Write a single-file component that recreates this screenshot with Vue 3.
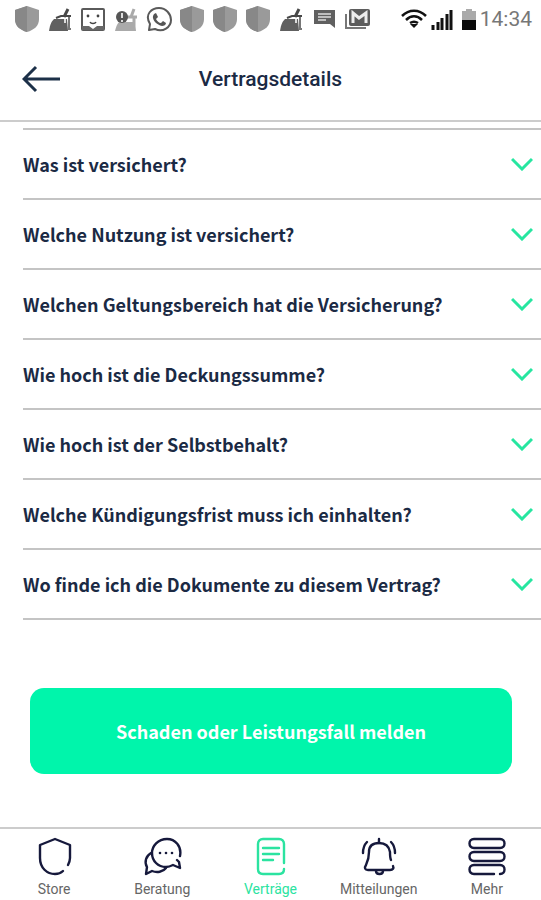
<script setup>
import { ref } from 'vue';

const notifications = [
  'shield', 'broom', 'face', 'alert', 'whatsapp',
  'shield', 'shield', 'shield', 'broom', 'chat', 'mail'
];

const questions = [
  'Was ist versichert?',
  'Welche Nutzung ist versichert?',
  'Welchen Geltungsbereich hat die Versicherung?',
  'Wie hoch ist die Deckungssumme?',
  'Wie hoch ist der Selbstbehalt?',
  'Welche Kündigungsfrist muss ich einhalten?',
  'Wo finde ich die Dokumente zu diesem Vertrag?'
];

const tabs = [
  {
    id: 'store',
    label: 'Store',
    paths: ['M34 29C35 27 36 25 36 22V9L21 3L6 9V22C6 32 13 38 21 38C24 38 27 37 29 35']
  },
  {
    id: 'advice',
    label: 'Beratung',
    paths: [
      'M38 20C40 10 33 3 25 3C16 3 10 10 10 17C10 25 16 31 24 31C27 31 29 30 31 29L38 32L37 26L35 24',
      'M9 17C4 20 2 26 5 31L4 38L10 35C15 37 21 36 24 32'
    ]
  },
  {
    id: 'contracts',
    label: 'Verträge',
    paths: [
      'M34 27V8C34 5 32 3 29 3H13C10 3 8 5 8 8V33C8 36 10 38 13 38H29C32 38 34 36 34 33',
      'M13 12H29M13 18H29M13 24H23'
    ]
  },
  {
    id: 'messages',
    label: 'Mitteilungen',
    paths: [
      'M32 24C31 22 31 19 31 16C30 10 26 7 20 7C14 7 10 10 10 16C10 23 9 25 7 29C5 32 6 34 9 34H31C34 34 35 32 34 30',
      'M20 3V7M17 35C17 39 24 39 24 35M8 6C5 9 4 12 4 17M32 6C35 9 36 12 36 17'
    ]
  },
  {
    id: 'more',
    label: 'Mehr',
    paths: [
      'M7 3H33C39 3 39 12 33 12H7C1 12 1 3 7 3Z',
      'M7 16H33C39 16 39 25 33 25H7C1 25 1 16 7 16Z',
      'M27 38H7C1 38 1 29 7 29H33C39 29 39 38 33 38'
    ]
  }
];

const activeTab = ref('contracts');
</script>

<template>
  <div class="page">
    <!-- Statusleiste -->
    <div class="status-bar">
      <div class="notifications">
        <svg
          v-for="(icon, index) in notifications"
          :key="index"
          class="status-icon"
          viewBox="0 0 28 28"
          aria-hidden="true"
        >
          <g v-if="icon === 'shield'">
            <path d="M14 1L26 5V14C26 21 21 25 14 27C7 25 2 21 2 14V5Z" fill="#9a9a9a" />
            <path d="M14 1V27C7 25 2 21 2 14V5Z" fill="#888" />
          </g>
          <g v-else-if="icon === 'broom'">
            <path d="M8 14H21L22 26H3C4 20 5 17 8 14Z" fill="#606060" />
            <path d="M10 13L15 11H25" fill="none" stroke="#484848" stroke-width="2" />
            <path d="M18 12L22 4" fill="none" stroke="#484848" stroke-width="3" />
            <path d="M19 14V18" fill="none" stroke="#ddd" stroke-width="2" />
            <path d="M23 12V24H25" fill="none" stroke="#777" stroke-width="2" />
          </g>
          <g v-else-if="icon === 'face'">
            <rect x="3" y="4" width="22" height="21" rx="1" fill="none" stroke="#5a5a5a" stroke-width="2" />
            <path d="M3 21H10L14 24L18 21H25V25H3Z" fill="#686868" />
            <circle cx="9" cy="11" r="1.4" fill="#444" />
            <circle cx="19" cy="11" r="1.4" fill="#444" />
            <path d="M11 17C12 19 16 19 17 17" fill="none" stroke="#444" stroke-width="1.5" />
          </g>
          <g v-else-if="icon === 'alert'">
            <path d="M7 17H22L24 26H3C4 22 5 19 7 17Z" fill="#aaa" />
            <path d="M14 12H25M19 12L22 4M22 13V26" fill="none" stroke="#aaa" stroke-width="3" />
            <circle cx="10" cy="12" r="6" fill="#555" />
            <path d="M10 8V13M10 15V17" fill="none" stroke="#ddd" stroke-width="2" />
          </g>
          <g v-else-if="icon === 'whatsapp'">
            <path d="M4 25L5 19C-1 9 7 3 14 3C21 3 26 9 26 15C26 22 18 28 10 24Z" fill="none" stroke="#5a5a5a" stroke-width="2" stroke-linejoin="round" />
            <path d="M9 9L11 8L13 12L11 14C12 16 14 18 16 18L18 16L21 18C21 20 19 21 17 21C12 20 7 15 8 11Z" fill="#555" />
          </g>
          <g v-else-if="icon === 'chat'">
            <path d="M4 5H25V23L20 19H4Z" fill="#606060" />
            <path d="M8 9H21M8 12H21M8 15H16" fill="none" stroke="#ddd" stroke-width="1.5" />
          </g>
          <g v-else>
            <path d="M3 9V23H23" fill="none" stroke="#777" stroke-width="2" />
            <rect x="6" y="4" width="21" height="17" rx="2" fill="#5d5d5d" />
            <path d="M10 18V8L16 13L23 8V18" fill="none" stroke="#eee" stroke-width="3" />
          </g>
        </svg>
      </div>
      <div class="system">
        <svg class="status-icon" viewBox="0 0 28 28" aria-hidden="true">
          <path d="M2 11C9 4 19 4 26 11M6 15C11 10 17 10 22 15M10 18C13 16 15 16 18 18" fill="none" stroke="#111" stroke-width="2.5" />
          <path d="M10 19H18L14 23Z" fill="#111" />
        </svg>
        <svg class="status-icon" viewBox="0 0 28 28" aria-hidden="true">
          <path d="M5 25V20M10 25V17M14 25V13M19 25V9M23 25V5" fill="none" stroke="#111" stroke-width="3" />
        </svg>
        <svg class="battery-icon" viewBox="0 0 14 28" aria-hidden="true">
          <path d="M4 4H10V6H14V16H0V6H4Z" fill="#aaa" />
          <path d="M0 15H14V25H0Z" fill="#0a0a0a" />
        </svg>
        <span class="clock">14:34</span>
      </div>
    </div>

    <header class="header">
      <button class="back-button" type="button" aria-label="Zurück">
        <svg class="back-icon" viewBox="0 0 40 28" aria-hidden="true">
          <path d="M14 2L2 14L14 26M2 14H38" fill="none" stroke="#1c3048" stroke-width="3" />
        </svg>
      </button>
      <h1 class="title">Vertragsdetails</h1>
    </header>

    <main class="content">
      <div class="questions">
        <button
          v-for="question in questions"
          :key="question"
          class="question"
          type="button"
        >
          <span>{{ question }}</span>
          <svg class="chevron" viewBox="0 0 22 14" aria-hidden="true">
            <path d="M1 2L11 12L21 2" fill="none" stroke="#26e6a0" stroke-width="3" />
          </svg>
        </button>
      </div>
      <button class="report-button" type="button">Schaden oder Leistungsfall melden</button>
    </main>

    <!-- Navigation unten -->
    <nav class="tab-bar">
      <button
        v-for="tab in tabs"
        :key="tab.id"
        class="tab"
        :class="{ active: activeTab === tab.id }"
        type="button"
        @click="activeTab = tab.id"
      >
        <svg class="tab-icon" viewBox="0 0 40 42" aria-hidden="true">
          <path
            v-for="(path, index) in tab.paths"
            :key="index"
            :d="path"
            fill="none"
            stroke="currentColor"
            stroke-width="2.4"
            stroke-linecap="round"
            stroke-linejoin="round"
          />
          <g v-if="tab.id === 'advice'" fill="currentColor">
            <circle cx="18" cy="17" r="1.3" />
            <circle cx="24" cy="17" r="1.3" />
            <circle cx="30" cy="17" r="1.3" />
          </g>
        </svg>
        <span class="tab-label">{{ tab.label }}</span>
      </button>
    </nav>
  </div>
</template>

<style>
body {
  margin: 0;
  background: #fff;
}
</style>

<style scoped>
.page {
  display: flex;
  flex-direction: column;
  min-height: 100vh;
  background: #fff;
  color: #1b2a44;
  font-family: Roboto, "Liberation Sans", sans-serif;
}

button {
  margin: 0;
  padding: 0;
  border: none;
  background: none;
  color: inherit;
  font: inherit;
  cursor: pointer;
}

svg {
  display: block;
  flex-shrink: 0;
}

.status-bar {
  display: flex;
  align-items: center;
  justify-content: space-between;
  height: 38px;
  padding: 0 9px 0 13px;
}

.notifications {
  display: flex;
  gap: 5px;
}

.system {
  display: flex;
  align-items: center;
}

.status-icon {
  width: 28px;
  height: 28px;
}

.battery-icon {
  width: 14px;
  height: 28px;
  margin: 0 4px 0 6px;
}

.clock {
  font-size: 21px;
  line-height: 28px;
  color: #777;
}

/* Kopfzeile */
.header {
  display: grid;
  grid-template-columns: 40px 1fr 40px;
  align-items: center;
  height: 82px;
  padding: 0 22px;
  border-bottom: 2px solid #ccc;
}

.back-icon {
  width: 40px;
  height: 28px;
}

.title {
  margin: 0;
  font-size: 21px;
  font-weight: 500;
  line-height: 28px;
  text-align: center;
}

.content {
  flex: 1;
  display: flex;
  flex-direction: column;
}

.questions {
  display: flex;
  flex-direction: column;
  margin: 6px 0 0 23px;
  border-top: 2px solid #c4c4c4;
}

.question {
  display: flex;
  align-items: center;
  justify-content: space-between;
  height: 70px;
  padding-right: 8px;
  border-bottom: 2px solid #c4c4c4;
  font-family: "Noto Sans CJK SC", "Noto Sans", sans-serif;
  font-size: 18px;
  font-weight: 700;
  line-height: 28px;
  text-align: left;
}

.chevron {
  width: 22px;
  height: 14px;
}

.report-button {
  height: 86px;
  margin: 68px 29px 52px 30px;
  border-radius: 14px;
  background: #00f5ab;
  color: #fff;
  font-family: "Noto Sans CJK SC", "Noto Sans", sans-serif;
  font-size: 18px;
  font-weight: 700;
  line-height: 28px;
}

/* Tableiste */
.tab-bar {
  position: sticky;
  bottom: 0;
  display: grid;
  grid-template-columns: repeat(5, 1fr);
  border-top: 2px solid #ccc;
  background: #fff;
}

.tab {
  display: flex;
  flex-direction: column;
  align-items: center;
  gap: 1px;
  padding: 7px 0 1px;
  color: #16193c;
}

.tab-icon {
  width: 40px;
  height: 42px;
}

.tab-label {
  font-size: 14px;
  line-height: 20px;
  color: #666;
}

.tab.active,
.tab.active .tab-label {
  color: #2be3a0;
}
</style>
